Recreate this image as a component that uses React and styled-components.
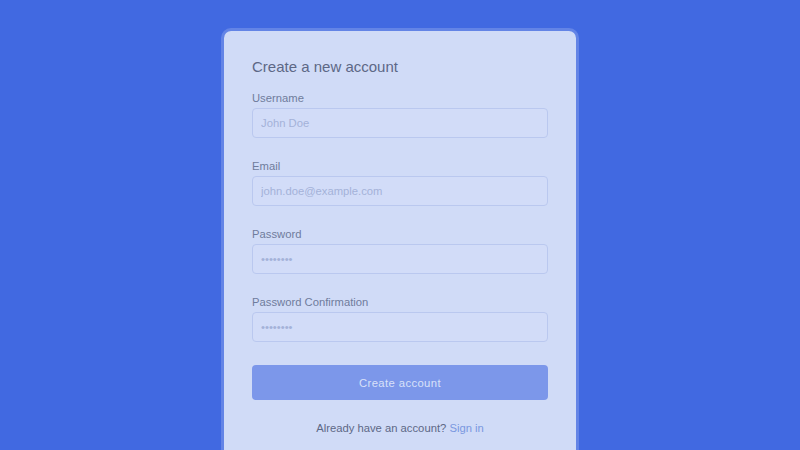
import styled, { createGlobalStyle } from 'styled-components';

const GlobalStyle = createGlobalStyle`
  html, body {
    margin: 0;
    padding: 0;
    background: #4169e1;
    font-family: "Liberation Sans", Arial, sans-serif;
  }
`;

const Page = styled.div`
  height: 450px;
  overflow: hidden;
  display: flex;
  justify-content: center;
  align-items: flex-start;
  padding-top: 28px;
  box-sizing: border-box;
`;

const Card = styled.form`
  display: flex;
  flex-direction: column;
  width: 296px;
  background: #d0dbf7;
  border: 3px solid rgba(255, 255, 255, 0.18);
  background-clip: padding-box;
  border-radius: 10px;
  padding: 27px 28px 40px;
`;

const Title = styled.h1`
  margin: 0 0 15px;
  font-size: 15px;
  line-height: 18px;
  font-weight: 400;
  color: #5d6886;
`;

const Field = styled.div`
  display: flex;
  flex-direction: column;
  margin-bottom: 21px;
`;

const Label = styled.label`
  font-size: 11.25px;
  line-height: 14px;
  color: #6f7c9c;
  margin-bottom: 3px;
`;

const Input = styled.input`
  height: 30px;
  box-sizing: border-box;
  border: 1px solid #bac8ef;
  border-radius: 4px;
  background: #d2dcf8;
  padding: 0 8px;
  font-family: inherit;
  font-size: 11.25px;
  color: #5d6886;
  outline: none;

  &::placeholder {
    color: #a4b2d8;
  }
`;

const Button = styled.button`
  width: 100%;
  height: 35px;
  margin-top: 2px;
  border: none;
  border-radius: 4px;
  background: #7c97ea;
  color: #d9e1f9;
  font-family: inherit;
  font-size: 11.25px;
  letter-spacing: 0.4px;
`;

const Footer = styled.p`
  margin: 21px 0 0;
  text-align: center;
  font-size: 11.25px;
  line-height: 14px;
  color: #5d6886;
`;

const Link = styled.a`
  color: #7a98e0;
  text-decoration: none;
`;

const fields = [
  { id: 'username', label: 'Username', placeholder: 'John Doe' },
  { id: 'email', label: 'Email', placeholder: 'john.doe@example.com' },
  { id: 'password', label: 'Password', placeholder: '••••••••' },
  { id: 'confirm', label: 'Password Confirmation', placeholder: '••••••••' },
];

export default function App() {
  return (
    <>
      <GlobalStyle />
      <Page>
        <Card onSubmit={(e) => e.preventDefault()}>
          <Title>Create a new account</Title>
          {fields.map((field) => (
            <Field key={field.id}>
              <Label htmlFor={field.id}>{field.label}</Label>
              <Input id={field.id} type="text" placeholder={field.placeholder} />
            </Field>
          ))}
          <Button type="submit">Create account</Button>
          <Footer>
            Already have an account? <Link href="#">Sign in</Link>
          </Footer>
        </Card>
      </Page>
    </>
  );
}
